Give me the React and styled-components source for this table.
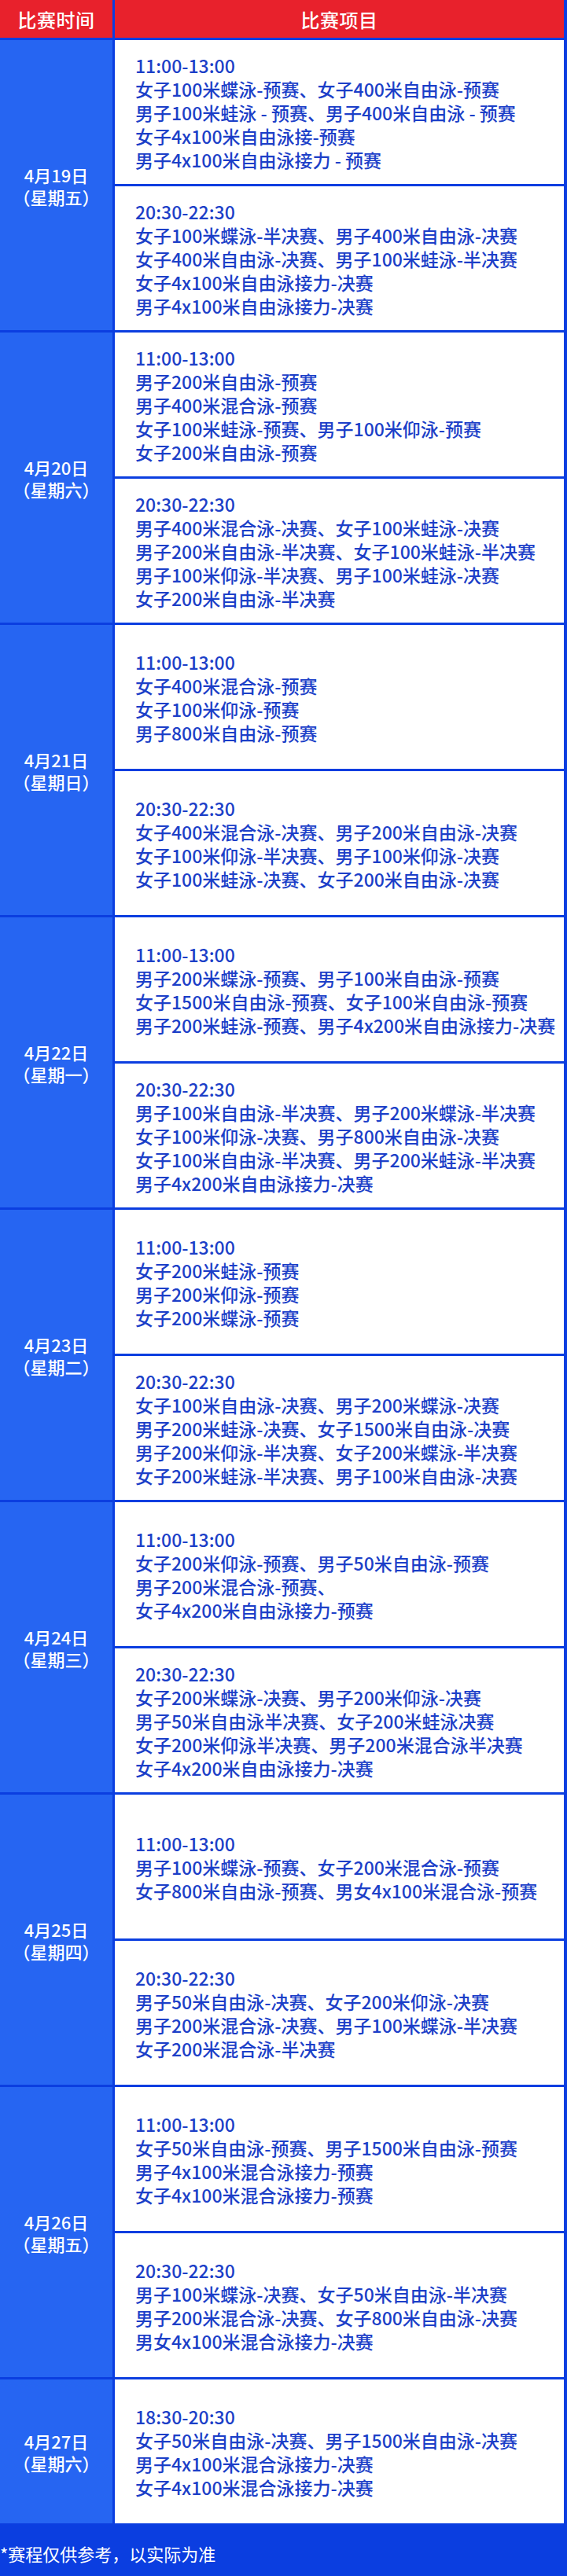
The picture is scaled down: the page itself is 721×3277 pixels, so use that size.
import React from 'react';
import styled, { createGlobalStyle } from 'styled-components';

const GlobalStyle = createGlobalStyle`
  html, body {
    margin: 0;
    padding: 0;
    background: #0b3ee0;
  }
  body {
    font-family: "Noto Sans CJK SC", "Noto Sans", sans-serif;
  }
`

const Page = styled.div`
  width: 721px;
  background: #0b3ee0;
  display: flex;
  flex-direction: column;
  gap: 3px;
`
const HeaderRow = styled.div`
  display: grid;
  grid-template-columns: 143px 1fr;
  column-gap: 3px;
  padding-right: 4px;
  height: 48px;
`
const HeaderCell = styled.div`
  background: #e8212c;
  color: #fff;
  font-size: 24px;
  font-weight: 500;
  display: flex;
  align-items: center;
  justify-content: center;
  letter-spacing: 0.5px;
`
const DayRow = styled.div`
  display: grid;
  grid-template-columns: 143px 1fr;
  column-gap: 3px;
  padding-right: 4px;
`
const DateCell = styled.div`
  background: #2665f2;
  color: #fff;
  font-size: 22px;
  font-weight: 500;
  line-height: 28px;
  display: flex;
  flex-direction: column;
  align-items: center;
  justify-content: center;
`
const Sessions = styled.div`
  display: flex;
  flex-direction: column;
  gap: 3px;
`
const Session = styled.div`
  background: #fff;
  height: 183px;
  padding-left: 26px;
  display: flex;
  flex-direction: column;
  justify-content: center;
  color: #1c3fc8;
  font-size: 23px;
  font-weight: 500;
  line-height: 30px;
  white-space: nowrap;
  overflow: hidden;
`
const Line = styled.div``
const Note = styled.div`
  height: 62px;
  color: #fff;
  font-size: 22px;
  display: flex;
  align-items: center;
  padding-top: 8px;
  box-sizing: border-box;
`

const days = [
  {
    date: '4月19日', week: '（星期五）', sessions: [
      ['11:00-13:00', '女子100米蝶泳-预赛、女子400米自由泳-预赛', '男子100米蛙泳 - 预赛、男子400米自由泳 - 预赛', '女子4x100米自由泳接-预赛', '男子4x100米自由泳接力 - 预赛'],
      ['20:30-22:30', '女子100米蝶泳-半决赛、男子400米自由泳-决赛', '女子400米自由泳-决赛、男子100米蛙泳-半决赛', '女子4x100米自由泳接力-决赛', '男子4x100米自由泳接力-决赛'],
    ]
  },
  {
    date: '4月20日', week: '（星期六）', sessions: [
      ['11:00-13:00', '男子200米自由泳-预赛', '男子400米混合泳-预赛', '女子100米蛙泳-预赛、男子100米仰泳-预赛', '女子200米自由泳-预赛'],
      ['20:30-22:30', '男子400米混合泳-决赛、女子100米蛙泳-决赛', '男子200米自由泳-半决赛、女子100米蛙泳-半决赛', '男子100米仰泳-半决赛、男子100米蛙泳-决赛', '女子200米自由泳-半决赛'],
    ]
  },
  {
    date: '4月21日', week: '（星期日）', sessions: [
      ['11:00-13:00', '女子400米混合泳-预赛', '女子100米仰泳-预赛', '男子800米自由泳-预赛'],
      ['20:30-22:30', '女子400米混合泳-决赛、男子200米自由泳-决赛', '女子100米仰泳-半决赛、男子100米仰泳-决赛', '女子100米蛙泳-决赛、女子200米自由泳-决赛'],
    ]
  },
  {
    date: '4月22日', week: '（星期一）', sessions: [
      ['11:00-13:00', '男子200米蝶泳-预赛、男子100米自由泳-预赛', '女子1500米自由泳-预赛、女子100米自由泳-预赛', '男子200米蛙泳-预赛、男子4x200米自由泳接力-决赛'],
      ['20:30-22:30', '男子100米自由泳-半决赛、男子200米蝶泳-半决赛', '女子100米仰泳-决赛、男子800米自由泳-决赛', '女子100米自由泳-半决赛、男子200米蛙泳-半决赛', '男子4x200米自由泳接力-决赛'],
    ]
  },
  {
    date: '4月23日', week: '（星期二）', sessions: [
      ['11:00-13:00', '女子200米蛙泳-预赛', '男子200米仰泳-预赛', '女子200米蝶泳-预赛'],
      ['20:30-22:30', '女子100米自由泳-决赛、男子200米蝶泳-决赛', '男子200米蛙泳-决赛、女子1500米自由泳-决赛', '男子200米仰泳-半决赛、女子200米蝶泳-半决赛', '女子200米蛙泳-半决赛、男子100米自由泳-决赛'],
    ]
  },
  {
    date: '4月24日', week: '（星期三）', sessions: [
      ['11:00-13:00', '女子200米仰泳-预赛、男子50米自由泳-预赛', '男子200米混合泳-预赛、', '女子4x200米自由泳接力-预赛'],
      ['20:30-22:30', '女子200米蝶泳-决赛、男子200米仰泳-决赛', '男子50米自由泳半决赛、女子200米蛙泳决赛', '女子200米仰泳半决赛、男子200米混合泳半决赛', '女子4x200米自由泳接力-决赛'],
    ]
  },
  {
    date: '4月25日', week: '（星期四）', sessions: [
      ['11:00-13:00', '男子100米蝶泳-预赛、女子200米混合泳-预赛', '女子800米自由泳-预赛、男女4x100米混合泳-预赛'],
      ['20:30-22:30', '男子50米自由泳-决赛、女子200米仰泳-决赛', '男子200米混合泳-决赛、男子100米蝶泳-半决赛', '女子200米混合泳-半决赛'],
    ]
  },
  {
    date: '4月26日', week: '（星期五）', sessions: [
      ['11:00-13:00', '女子50米自由泳-预赛、男子1500米自由泳-预赛', '男子4x100米混合泳接力-预赛', '女子4x100米混合泳接力-预赛'],
      ['20:30-22:30', '男子100米蝶泳-决赛、女子50米自由泳-半决赛', '男子200米混合泳-决赛、女子800米自由泳-决赛', '男女4x100米混合泳接力-决赛'],
    ]
  },
  {
    date: '4月27日', week: '（星期六）', sessions: [
      ['18:30-20:30', '女子50米自由泳-决赛、男子1500米自由泳-决赛', '男子4x100米混合泳接力-决赛', '女子4x100米混合泳接力-决赛'],
    ]
  },
]

export default function App() {
  return (
    <Page>
      <GlobalStyle />
      <HeaderRow>
        <HeaderCell>比赛时间</HeaderCell>
        <HeaderCell>比赛项目</HeaderCell>
      </HeaderRow>
      {days.map(day => (
        <DayRow key={day.date}>
          <DateCell>
            <div>{day.date}</div>
            <div>{day.week}</div>
          </DateCell>
          <Sessions>
            {day.sessions.map((lines, i) => (
              <Session key={i}>
                {lines.map((t, j) => <Line key={j}>{t}</Line>)}
              </Session>
            ))}
          </Sessions>
        </DayRow>
      ))}
      <Note>*赛程仅供参考，以实际为准</Note>
    </Page>
  )
}
